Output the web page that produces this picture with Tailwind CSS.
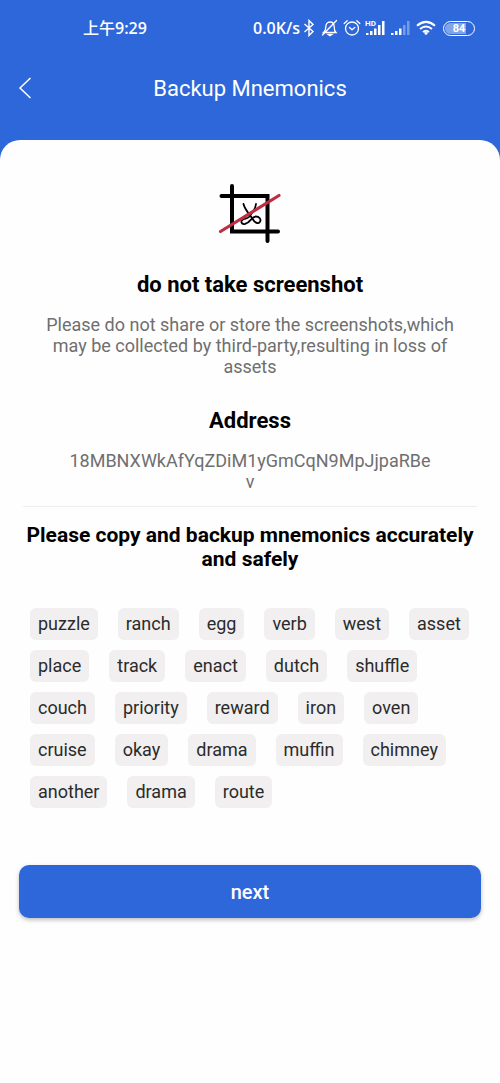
<!DOCTYPE html>
<html lang="en">
<head>
<meta charset="utf-8">
<meta name="viewport" content="width=device-width, initial-scale=1">
<title>Backup Mnemonics</title>
<script src="https://cdn.jsdelivr.net/npm/@tailwindcss/browser@4"></script>
</head>
<body class="min-h-screen flex flex-col bg-[#2e67d9] font-[Roboto,'Noto_Sans_CJK_SC',sans-serif]">
<!-- Status bar -->
<div class="h-14 shrink-0 flex items-center justify-between pl-[83px] pr-[25px] text-white">
  <span class="text-base font-semibold leading-6 font-['Open_Sans','Noto_Sans_CJK_SC',sans-serif]"><span class="font-medium">上午</span>9:29</span>
  <div class="flex items-center">
    <span class="text-base font-semibold leading-6 font-['Open_Sans',sans-serif]">0.0K/s</span>
    <svg class="ml-[3px]" width="12" height="18" viewBox="0 0 12 18" fill="none" stroke="currentColor" stroke-width="1.400"><path d="M1.500 5 10 12.500 6 16.500V1.500L10 5.500 1.500 13"/></svg>
    <svg class="ml-1.5" width="18" height="18" viewBox="0 0 18 18" fill="none" stroke="currentColor" stroke-width="1.300" stroke-linecap="round"><path d="M2.500 13.500h12.500c-1.600-1.500-1.800-3-1.800-5.500 0-3-1.500-5-4.200-5S4.800 5 4.800 8c0 2.500-.5 4-2.300 5.500zM1.500 16 15.500 1.500"/><path d="M7 15.300h4L9 16.800z" fill="currentColor"/></svg>
    <svg class="ml-1" width="18" height="18" viewBox="0 0 18 18" fill="none" stroke="currentColor" stroke-width="1.300" stroke-linecap="round" stroke-linejoin="round"><circle cx="9" cy="9.500" r="6.500"/><path d="M1.200 4.500 4.200 1.800M16.800 4.500l-3-2.700M6.500 8.500 9 10.800l2.800-2.300"/></svg>
    <svg class="ml-1" width="21" height="18" viewBox="0 0 21 18" fill="currentColor"><text x="0" y="7" font-size="8" font-weight="700" font-family="Roboto">HD</text><path d="M1 14h2.500v2H1zM5 12h2.500v4H5zM9 9.500h2.500V16H9zM13 6h2.500v10H13zM17 2h2.500v14H17z"/></svg>
    <svg class="ml-[5px]" width="20" height="18" viewBox="0 0 20 18" fill="currentColor"><path d="M0 14h2.500v2H0zM4 12h2.500v4H4zM8 9.500h2.500V16H8z"/><path opacity=".35" d="M12 6h2.500v10H12zM16 2h2.500v14H16z"/></svg>
    <svg class="ml-[5px]" width="20" height="18" viewBox="0 0 20 18" fill="none" stroke="currentColor" stroke-width="2"><path d="M1 6.800Q10-1 19 6.800M4 10Q10 5 16 10M7 13Q10 10.500 13 13"/><path d="M7.800 13.800 10 16.300l2.200-2.500Q10 12.300 7.800 13.800z" fill="currentColor" stroke="none"/></svg>
    <span class="ml-[7px] w-8 h-[15px] rounded-full border border-white p-px flex"><span class="flex-1 rounded-full bg-linear-to-r from-white/40 from-75% to-transparent to-75% flex items-center justify-center text-[11px] font-bold leading-none">84</span></span>
  </div>
</div>

<header class="h-[84px] shrink-0 grid grid-cols-[50px_1fr_50px] text-white">
  <button type="button" aria-label="Back" class="h-16 flex items-center justify-center"><svg width="14" height="22" viewBox="0 0 14 22" fill="none" stroke="currentColor" stroke-width="1.500"><path d="M12.500 1 2 11l10.500 10"/></svg></button>
  <h1 class="h-16 flex items-center justify-center text-[22px]">Backup Mnemonics</h1>
</header>

<main class="flex-1 rounded-t-[20px] bg-[#fefefe] px-[19px] pt-11 text-center">
  <svg class="mx-auto" width="64" height="60" viewBox="0 0 64 60" fill="none" stroke="#000" stroke-linecap="round">
    <path stroke-width="4" d="M3.500 12H49.500V57M14 2V47.500H60"/>
    <path stroke-width="1.800" d="M25.500 20C26.500 25 30.500 29 34 34c2.500 4.500 6 6.500 7.800 4s-.5-5.500-4-5.500c-4.500 0-5 6.500-11 7.500-3.500.5-4.500-2.500-2-4.500 2-1.500 4.500-.5 6.200-2.500C34.500 29 37.500 25.500 38 20"/>
    <path stroke="#bd2d43" stroke-width="3.200" d="M2.500 47.500 61 11.500"/>
  </svg>
  <h2 class="mt-[29px] text-[22px] leading-6 font-bold text-black">do not take screenshot</h2>
  <p class="mt-[17px] mx-5 text-lg leading-[21px] text-[#6f6f6f]">Please do not share or store the screenshots,which may be collected by third-party,resulting in loss of assets</p>
  <h2 class="mt-8 text-[22px] leading-6 font-bold text-black">Address</h2>
  <p class="mt-[17px] mx-12 text-lg leading-[21px] text-[#6f6f6f] break-all">18MBNXWkAfYqZDiM1yGmCqN9MpJjpaRBev</p>
  <hr class="mt-[14px] mx-1 border-[#eeeeee]">
  <h2 class="mt-4 text-[21px] leading-6 font-bold text-black">Please copy and backup mnemonics accurately and safely</h2>
  <ul class="mt-[37px] pl-[11px] flex flex-wrap gap-x-5 gap-y-2.5 text-lg leading-8 text-[#2b2b2b]">
    <li class="rounded-md bg-[#f1eff0] px-2">puzzle</li>
    <li class="rounded-md bg-[#f1eff0] px-2">ranch</li>
    <li class="rounded-md bg-[#f1eff0] px-2">egg</li>
    <li class="rounded-md bg-[#f1eff0] px-2">verb</li>
    <li class="rounded-md bg-[#f1eff0] px-2">west</li>
    <li class="rounded-md bg-[#f1eff0] px-2">asset</li>
    <li class="rounded-md bg-[#f1eff0] px-2">place</li>
    <li class="rounded-md bg-[#f1eff0] px-2">track</li>
    <li class="rounded-md bg-[#f1eff0] px-2">enact</li>
    <li class="rounded-md bg-[#f1eff0] px-2">dutch</li>
    <li class="rounded-md bg-[#f1eff0] px-2">shuffle</li>
    <li class="rounded-md bg-[#f1eff0] px-2">couch</li>
    <li class="rounded-md bg-[#f1eff0] px-2">priority</li>
    <li class="rounded-md bg-[#f1eff0] px-2">reward</li>
    <li class="rounded-md bg-[#f1eff0] px-2">iron</li>
    <li class="rounded-md bg-[#f1eff0] px-2">oven</li>
    <li class="rounded-md bg-[#f1eff0] px-2">cruise</li>
    <li class="rounded-md bg-[#f1eff0] px-2">okay</li>
    <li class="rounded-md bg-[#f1eff0] px-2">drama</li>
    <li class="rounded-md bg-[#f1eff0] px-2">muffin</li>
    <li class="rounded-md bg-[#f1eff0] px-2">chimney</li>
    <li class="rounded-md bg-[#f1eff0] px-2">another</li>
    <li class="rounded-md bg-[#f1eff0] px-2">drama</li>
    <li class="rounded-md bg-[#f1eff0] px-2">route</li>
  </ul>
  <button type="button" class="mt-[57px] w-full h-[53px] rounded-[10px] bg-[#2e67d9] text-white text-xl font-medium shadow-[0_2px_4px_rgba(0,0,0,0.25)]">next</button>
</main>
</body>
</html>
